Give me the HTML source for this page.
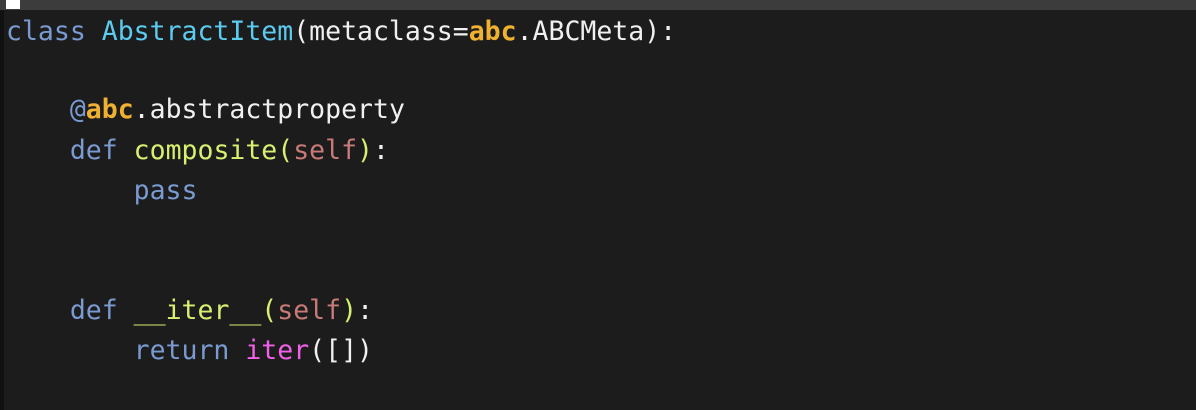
<!DOCTYPE html>
<html><head><style>
html,body{margin:0;padding:0;}
body{width:1196px;height:410px;background:#1c1c1c;position:relative;overflow:hidden;font-family:"DejaVu Sans Mono","Liberation Mono",monospace;}
.top{position:absolute;left:0;top:0;width:1196px;height:10px;background:#3c3c3c;}
.cur{position:absolute;left:6px;top:0;width:14px;height:9px;background:#fff;}
.left{position:absolute;left:0;top:10px;width:4px;height:400px;background:#111;}
.l{position:absolute;left:6px;font-size:26.5px;line-height:40px;height:40px;white-space:pre;color:#f0f0f0;}
.k{color:#7a9bd1}.c{color:#5ccbf0}.o{color:#f0b030;font-weight:bold}.f{color:#d8f070}.s{color:#c87a78}.m{color:#f060e8}
</style></head><body>
<div class="top"></div><div class="cur"></div><div class="left"></div>
<div class="l" style="top:12px"><span class="k">class</span> <span class="c">AbstractItem</span>(metaclass=<span class="o">abc</span>.ABCMeta):</div>
<div class="l" style="top:90px">    <span class="k">@</span><span class="o">abc</span>.abstractproperty</div>
<div class="l" style="top:131px">    <span class="k">def</span> <span class="f">composite(</span><span class="s">self</span><span class="f">)</span>:</div>
<div class="l" style="top:171px">        <span class="k">pass</span></div>
<div class="l" style="top:291px">    <span class="k">def</span> <span class="f">__iter__(</span><span class="s">self</span><span class="f">)</span>:</div>
<div class="l" style="top:331px">        <span class="k">return</span> <span class="m">iter</span>([])</div>
</body></html>
